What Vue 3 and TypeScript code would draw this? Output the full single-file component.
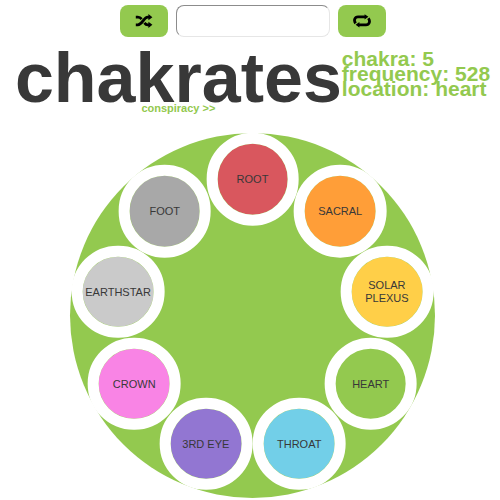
<script setup lang="ts">
import { ref, computed } from 'vue'

interface Chakra {
  id: number
  label: string
  frequency: number
  color: string
}

const chakras: Chakra[] = [
  { id: 1, label: 'root', frequency: 396, color: '#d9575e' },
  { id: 2, label: 'sacral', frequency: 417, color: '#ff9e38' },
  { id: 3, label: 'solar plexus', frequency: 432, color: '#ffcf48' },
  { id: 5, label: 'heart', frequency: 528, color: '#93c94f' },
  { id: 6, label: 'throat', frequency: 639, color: '#72cfe8' },
  { id: 7, label: '3rd eye', frequency: 741, color: '#9276d2' },
  { id: 8, label: 'crown', frequency: 852, color: '#f984e5' },
  { id: 9, label: 'earthstar', frequency: 963, color: '#cacaca' },
  { id: 10, label: 'foot', frequency: 174, color: '#a8a8a8' },
]

const query = ref('')
const index = ref(3)
const current = computed(() => chakras[index.value])

// Percentages of the wheel's size for the centre of each disc.
function place(i: number) {
  const angle = (i * 2 * Math.PI) / chakras.length
  return {
    left: `${50 + 37.4 * Math.sin(angle)}%`,
    top: `${50 - 37.4 * Math.cos(angle)}%`,
    backgroundColor: chakras[i].color,
  }
}

function shuffle() {
  index.value = Math.floor(Math.random() * chakras.length)
}

function next() {
  index.value = (index.value + 1) % chakras.length
}
</script>

<template>
  <main class="page">
    <form class="controls" @submit.prevent>
      <button type="button" class="btn" aria-label="Shuffle" @click="shuffle">
        <svg class="icon" viewBox="0 0 18 14" aria-hidden="true">
          <path class="line" d="M.8 10.8H2.9C7.4 10.8 8.6 3.2 12.8 3.2H14M.8 3.2H2.9C4.6 3.2 5.7 4 6.6 5.2M9.4 8.8C10.3 10 11.2 10.8 12.8 10.8H14" />
          <path d="M13.4 .1 17.4 3.2 13.4 6.3zM13.4 7.7 17.4 10.8 13.4 13.9z" />
        </svg>
      </button>
      <input v-model="query" class="field" type="text" aria-label="Chakra name" />
      <button type="button" class="btn" aria-label="Repeat" @click="next">
        <svg class="icon" viewBox="0 0 18 14" aria-hidden="true">
          <path class="line" d="M2.6 9.4C.4 6.2 1.8 2.8 5 2.8H12M15.4 4.2C17.6 7.4 16.2 10.8 13 10.8H6" />
          <path d="M11.6 .2 15.4 2.8 11.6 5.6zM6.4 8 2.6 10.8 6.4 13.4z" />
        </svg>
      </button>
    </form>

    <header class="masthead">
      <div class="brand">
        <h1 class="title">chakrates</h1>
        <a class="more" href="#conspiracy">conspiracy &gt;&gt;</a>
      </div>
      <div class="info">
        <div>chakra: {{ current.id }}</div>
        <div>frequency: {{ current.frequency }}</div>
        <div>location: {{ current.label }}</div>
      </div>
    </header>

    <div class="wheel">
      <button
        v-for="(chakra, i) in chakras"
        :key="chakra.id"
        type="button"
        class="disc"
        :style="place(i)"
        @click="index = i"
      >
        {{ chakra.label }}
      </button>
    </div>
  </main>
</template>

<style>
body {
  background: #fff;
}
</style>

<style scoped>
.page {
  display: flex;
  flex-direction: column;
  align-items: center;
  padding: 5px 0 2px 5px;
  color: #383838;
  font-family: 'Liberation Sans', Arial, sans-serif;
}

.controls {
  display: flex;
  justify-content: center;
  gap: 8px;
}

.btn {
  display: flex;
  align-items: center;
  justify-content: center;
  width: 48px;
  height: 32px;
  padding: 0;
  border: 0;
  border-radius: 8px;
  background: #93c94f;
  color: #000;
  cursor: pointer;
}

.icon {
  width: 18px;
  height: 14px;
  fill: currentColor;
}

.line {
  fill: none;
  stroke: currentColor;
  stroke-width: 2.8;
}

.field {
  box-sizing: border-box;
  width: 154px;
  height: 32px;
  padding: 0 8px;
  border: 1px solid;
  border-color: #8c8c8c #e6e6e6 #e6e6e6 #8c8c8c;
  border-radius: 8px;
  background: #fff;
  font: inherit;
}

.masthead {
  display: flex;
  justify-content: center;
  margin-top: 14px;
  font-weight: bold;
}

.brand {
  display: flex;
  flex-direction: column;
  align-items: center;
}

.title {
  margin: 0;
  font-size: 70px;
  line-height: 54px;
}

.more {
  color: #93c94f;
  font-size: 11px;
  line-height: 6px;
  text-decoration: none;
}

.info {
  color: #93c94f;
  font-size: 21px;
  line-height: 15px;
  white-space: nowrap;
}

.wheel {
  position: relative;
  width: 73%;
  min-width: 365px;
  aspect-ratio: 1;
  margin-top: 22px;
  border-radius: 50%;
  background: #93c94f;
}

.disc {
  position: absolute;
  display: flex;
  align-items: center;
  justify-content: center;
  box-sizing: border-box;
  width: 25.4%;
  height: 25.4%;
  padding: 0;
  border: 11px solid #fff;
  border-radius: 50%;
  background-clip: padding-box;
  color: #383838;
  font-family: inherit;
  font-size: 11px;
  line-height: 13px;
  text-transform: uppercase;
  transform: translate(-50%, -50%);
  cursor: pointer;
}
</style>
